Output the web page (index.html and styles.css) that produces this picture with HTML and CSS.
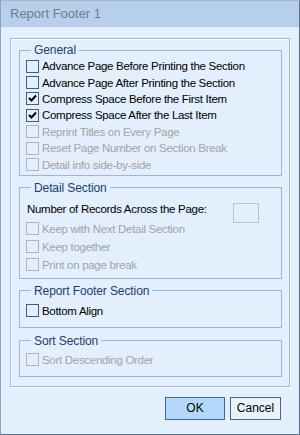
FILE: index.html
```html
<!DOCTYPE html>
<html lang="en">
<head>
    <meta charset="UTF-8">
    <meta name="viewport" content="width=device-width, initial-scale=1.0">
    <title>Report Footer 1</title>
    <link rel="stylesheet" href="styles.css">
</head>
<body>

    <div class="window">
        <div class="titlebar">Report Footer 1</div>

        <div class="client">
            <div class="frame">

                <fieldset class="group general">
                    <legend>General</legend>
                    <div class="check"><span class="box"></span>Advance Page Before Printing the Section</div>
                    <div class="check"><span class="box"></span>Advance Page After Printing the Section</div>
                    <div class="check"><span class="box checked"><svg width="11" height="11" viewBox="0 0 11 11"><polyline points="2,5 4.5,7.5 9,2.5" fill="none" stroke="#000" stroke-width="2"/></svg></span>Compress Space Before the First Item</div>
                    <div class="check"><span class="box checked"><svg width="11" height="11" viewBox="0 0 11 11"><polyline points="2,5 4.5,7.5 9,2.5" fill="none" stroke="#000" stroke-width="2"/></svg></span>Compress Space After the Last Item</div>
                    <div class="check disabled"><span class="box"></span>Reprint Titles on Every Page</div>
                    <div class="check disabled"><span class="box"></span>Reset Page Number on Section Break</div>
                    <div class="check disabled"><span class="box"></span>Detail info side-by-side</div>
                </fieldset>

                <fieldset class="group detail">
                    <legend>Detail Section</legend>
                    <div class="records">
                        <span>Number of Records Across the Page:</span>
                        <span class="textbox"></span>
                    </div>
                    <div class="check tall disabled"><span class="box"></span>Keep with Next Detail Section</div>
                    <div class="check tall disabled"><span class="box"></span>Keep together</div>
                    <div class="check tall disabled"><span class="box"></span>Print on page break</div>
                </fieldset>

                <fieldset class="group footer">
                    <legend>Report Footer Section</legend>
                    <div class="check tall"><span class="box"></span>Bottom Align</div>
                </fieldset>

                <fieldset class="group sort">
                    <legend>Sort Section</legend>
                    <div class="check tall disabled"><span class="box"></span>Sort Descending Order</div>
                </fieldset>

            </div>

            <div class="buttons">
                <button class="btn ok">OK</button>
                <button class="btn cancel">Cancel</button>
            </div>
        </div>
    </div>

</body>
</html>
```

FILE: styles.css
```css
body {
    margin: 0;
    font-family: "Liberation Sans", Arial, sans-serif;
    font-size: 11.5px;
    letter-spacing: -0.3px;
    color: #000;
}

.window {
    width: 300px;
    height: 435px;
    box-sizing: border-box;
    border: 1px solid #5d738c;
    border-top-color: #9fb9d6;
    border-left-color: #8aa4c0;
    background-color: #e3effc;
}

.titlebar {
    height: 26px;
    line-height: 26px;
    padding-left: 9px;
    background-color: #b7cfea;
    color: #6f7c8c;
    font-size: 13px;
    letter-spacing: 0;
}

.client {
    padding: 11px 9px 0 9px;
}

.frame {
    border: 1px solid #9ab7d3;
    box-shadow: 1px 1px 0 #fff, inset 1px 1px 0 #fff;
    padding: 4px 7px 9px 8px;
}

.group {
    margin: 5px 0 0 0;
    padding: 0 0 0 6px;
    min-width: 0;
    border: 1px solid #9ab7d3;
}

.group legend {
    margin-left: 5px;
    padding: 0 3px;
    line-height: 14px;
    color: #18406e;
    font-size: 12px;
    letter-spacing: -0.1px;
}

.general {
    margin-top: 0;
    padding-top: 1px;
    padding-bottom: 2px;
}

.detail {
    padding-bottom: 4px;
}

.footer {
    padding-top: 4px;
    padding-bottom: 7px;
}

.sort {
    margin-top: 6px;
    padding-top: 3px;
    padding-bottom: 7px;
}

.check {
    display: flex;
    align-items: center;
    height: 16.4px;
    white-space: nowrap;
}

.check.tall {
    height: 18px;
}

.box {
    width: 11px;
    height: 11px;
    border: 1px solid #3f5f80;
    margin-right: 3px;
    display: flex;
    align-items: center;
    justify-content: center;
}

.disabled {
    color: #a3a3a3;
}

.disabled .box {
    border-color: #b3b3b3;
}

.records {
    display: flex;
    align-items: flex-start;
    justify-content: space-between;
    height: 19px;
    margin-top: 6px;
    padding: 0 22px 0 1px;
    line-height: 16px;
}

.textbox {
    width: 24px;
    height: 18px;
    margin-top: 2px;
    border: 1px solid #b8c4d0;
}

.buttons {
    display: flex;
    justify-content: flex-end;
    gap: 5px;
    margin-top: 10px;
    padding-right: 9px;
}

.btn {
    height: 23px;
    font-family: "Liberation Sans", Arial, sans-serif;
    font-size: 12px;
    color: #000;
    border: 1px solid #4a6782;
    background-color: #eaf2fc;
    padding: 0;
}

.ok {
    width: 60px;
    border-color: #3b6b98;
    background-color: #b6d8f8;
}

.cancel {
    width: 51px;
}
```
